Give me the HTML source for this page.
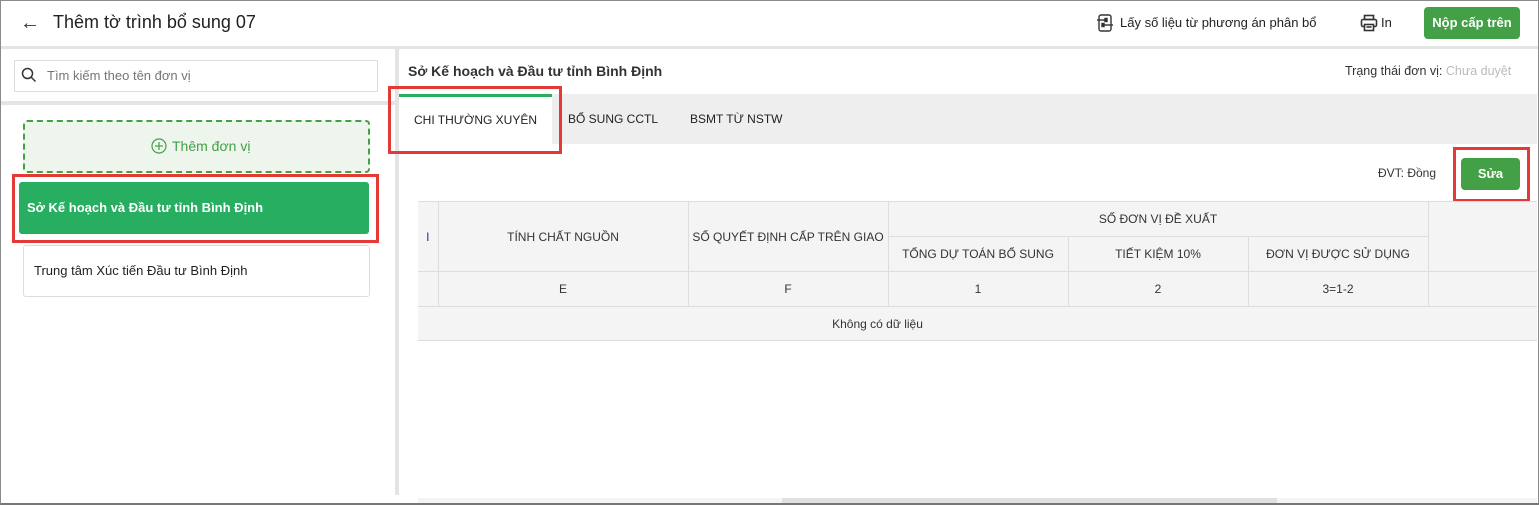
<!DOCTYPE html>
<html><head><meta charset="utf-8"><style>
*{box-sizing:border-box;margin:0;padding:0}
body{width:1539px;height:505px;overflow:hidden;background:#fff;font-family:"Liberation Sans",Arial,sans-serif;color:#212121;position:relative}
.a{position:absolute}
.frame{left:0;top:0;width:1539px;height:505px;border:1px solid #8a8a8a;border-bottom:2px solid #777}
th,td{border:1px solid #ddd;font-weight:normal;text-align:center;font-size:12px;color:#333}
table{border-collapse:collapse;background:#f4f4f4}
</style></head><body>
<div class="a" style="left:20px;top:12px;font-size:20px;color:#333">&#8592;</div>
<div class="a" style="left:53px;top:12px;font-size:18px;color:#212121">Thêm tờ trình bổ sung 07</div>

<svg class="a" style="left:1097px;top:14px" width="16" height="18" viewBox="0 0 16 18" fill="none" stroke="#333" stroke-width="1.4"><rect x="2" y="1" width="12" height="16" rx="2"/><line x1="0" y1="6" x2="10" y2="6"/><line x1="6" y1="11" x2="16" y2="11"/><rect x="8" y="4.5" width="2" height="3" fill="#333"/><rect x="5" y="9.5" width="2" height="3" fill="#333"/></svg>
<div class="a" style="left:1120px;top:15px;font-size:13px;color:#222">Lấy số liệu từ phương án phân bổ</div>
<svg class="a" style="left:1360px;top:14px" width="18" height="18" viewBox="0 0 18 18" fill="none" stroke="#333" stroke-width="1.6"><rect x="4.5" y="1.5" width="9" height="4"/><rect x="1.5" y="5.5" width="15" height="7" rx="1.5"/><rect x="4.5" y="10.5" width="9" height="6" fill="#fff"/><line x1="6.5" y1="13" x2="11.5" y2="13"/></svg>
<div class="a" style="left:1381px;top:15px;font-size:13px;color:#222">In</div>
<div class="a" style="left:1424px;top:7px;width:96px;height:32px;background:#43a047;border-radius:4px;color:#fff;font-size:13px;font-weight:bold;text-align:center;line-height:32px">Nộp cấp trên</div>

<div class="a" style="left:0;top:46px;width:1539px;height:3px;background:#e4e4e4"></div>
<div class="a" style="left:395px;top:49px;width:4px;height:446px;background:#e4e4e4"></div>
<div class="a" style="left:0;top:101px;width:395px;height:4px;background:#e4e4e4"></div>

<div class="a" style="left:14px;top:60px;width:364px;height:32px;border:1px solid #ddd"></div>
<svg class="a" style="left:21px;top:67px" width="16" height="16" viewBox="0 0 16 16" fill="none" stroke="#333" stroke-width="1.5"><circle cx="6.5" cy="6.5" r="5"/><line x1="10" y1="10" x2="14.5" y2="14.5"/></svg>
<div class="a" style="left:47px;top:68px;font-size:13px;color:#777">Tìm kiếm theo tên đơn vị</div>

<div class="a" style="left:23px;top:120px;width:347px;height:53px;border:2px dashed #43a047;border-radius:4px;background:#edf5ec"></div>
<svg class="a" style="left:151px;top:138px" width="16" height="16" viewBox="0 0 16 16" fill="none" stroke="#43a047" stroke-width="1.2"><circle cx="8" cy="8" r="7"/><line x1="8" y1="4" x2="8" y2="12"/><line x1="4" y1="8" x2="12" y2="8"/></svg>
<div class="a" style="left:172px;top:138px;font-size:14px;color:#43a047">Thêm đơn vị</div>

<div class="a" style="left:12px;top:174px;width:367px;height:69px;border:3px solid #e53935"></div>
<div class="a" style="left:19px;top:182px;width:350px;height:52px;background:#27ae60;border-radius:3px;color:#fff;font-weight:bold;font-size:13px;line-height:52px;padding-left:8px">Sở Kế hoạch và Đầu tư tỉnh Bình Định</div>
<div class="a" style="left:23px;top:245px;width:347px;height:52px;border:1px solid #ddd;border-radius:3px;font-size:13px;line-height:50px;padding-left:10px;color:#222">Trung tâm Xúc tiến Đầu tư Bình Định</div>

<div class="a" style="left:408px;top:63px;font-size:14px;font-weight:bold;color:#333">Sở Kế hoạch và Đầu tư tỉnh Bình Định</div>
<div class="a" style="left:1345px;top:64px;font-size:12.5px;color:#333">Trạng thái đơn vị: <span style="color:#bbb">Chưa duyệt</span></div>

<div class="a" style="left:399px;top:94px;width:1138px;height:50px;background:#eee"></div>
<div class="a" style="left:399px;top:94px;width:153px;height:50px;background:#fff;border-top:3px solid #27ae60"></div>
<div class="a" style="left:388px;top:86px;width:174px;height:68px;border:3px solid #e53935"></div>
<div class="a" style="left:414px;top:113px;font-size:12px;color:#222">CHI THƯỜNG XUYÊN</div>
<div class="a" style="left:568px;top:112px;font-size:12px;color:#222">BỔ SUNG CCTL</div>
<div class="a" style="left:690px;top:112px;font-size:12px;color:#222">BSMT TỪ NSTW</div>

<div class="a" style="left:1378px;top:166px;font-size:12px;color:#333">ĐVT: Đồng</div>
<div class="a" style="left:1453px;top:147px;width:77px;height:55px;border:3px solid #e53935"></div>
<div class="a" style="left:1461px;top:158px;width:59px;height:32px;background:#43a047;border-radius:4px;color:#fff;font-weight:bold;font-size:13px;text-align:center;line-height:32px">Sửa</div>

<table class="a" style="left:418px;top:201px;width:1119px">
<tr style="height:35px"><th rowspan="2" style="width:20px;border-left:none"><span style="color:#338">I</span></th><th rowspan="2" style="width:250px">TÍNH CHẤT NGUỒN</th><th rowspan="2" style="width:200px">SỐ QUYẾT ĐỊNH CẤP TRÊN GIAO</th><th colspan="3">SỐ ĐƠN VỊ ĐỀ XUẤT</th><th rowspan="2" style="border-right:none"></th></tr>
<tr style="height:35px"><th style="width:180px">TỔNG DỰ TOÁN BỔ SUNG</th><th style="width:180px">TIẾT KIỆM 10%</th><th style="width:180px">ĐƠN VỊ ĐƯỢC SỬ DỤNG</th></tr>
<tr style="height:35px"><td style="border-left:none"></td><td>E</td><td>F</td><td>1</td><td>2</td><td>3=1-2</td><td style="border-right:none"></td></tr>
<tr style="height:34px"><td colspan="7" style="border-left:none;border-right:none;padding-right:200px">Không có dữ liệu</td></tr>
</table>

<div class="a" style="left:418px;top:498px;width:1119px;height:5px;background:#f4f4f4"></div>
<div class="a" style="left:782px;top:498px;width:495px;height:5px;background:#e0e0e0"></div>
<div class="frame a"></div>
</body></html>
